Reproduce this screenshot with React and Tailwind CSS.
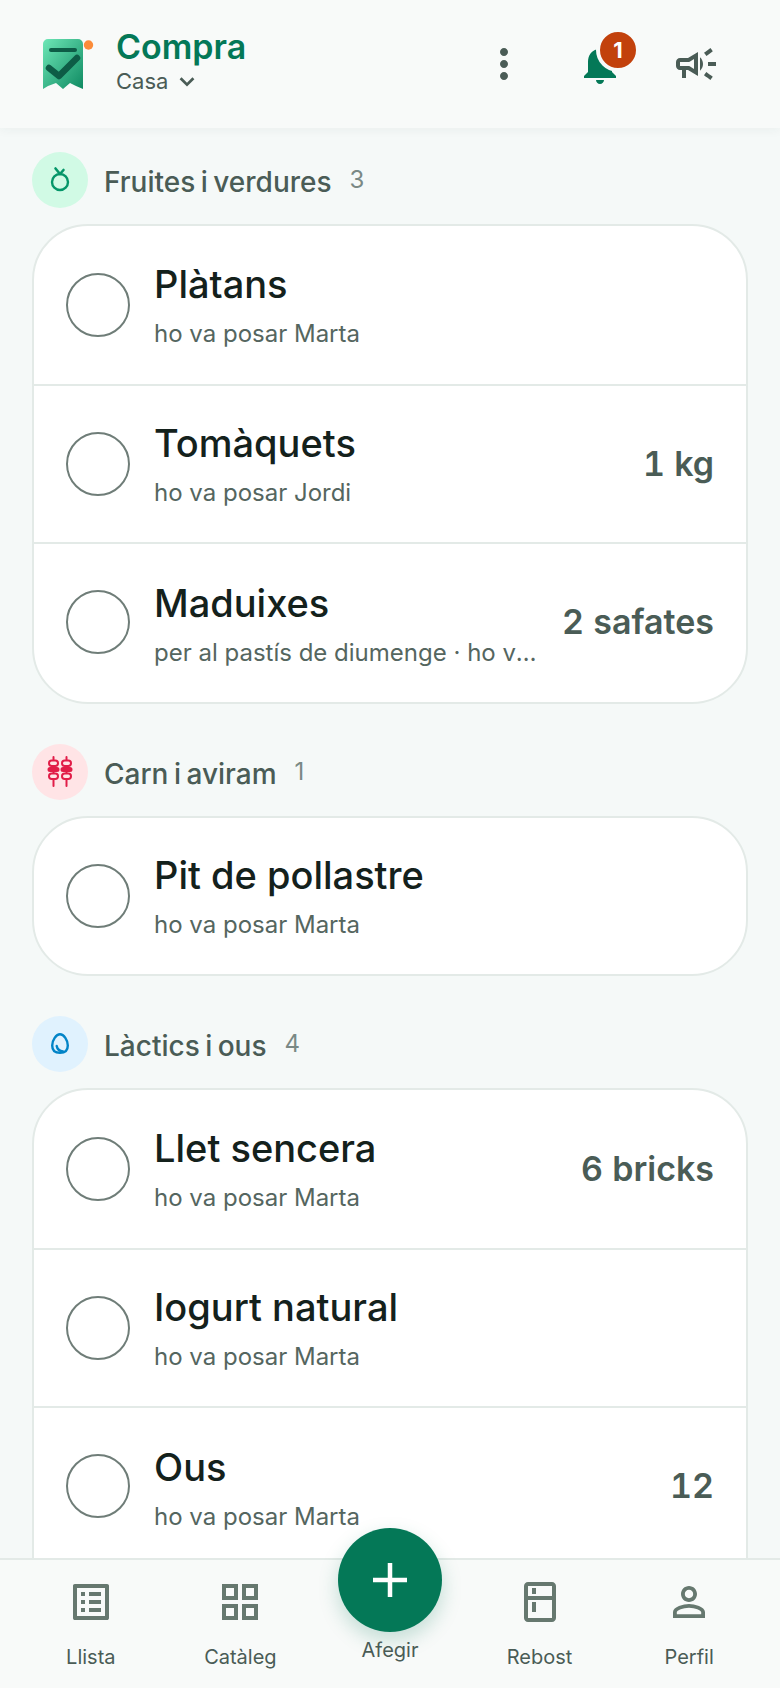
const I = ({ d, className = "" }) => (
  <svg viewBox="0 0 24 24" className={className} fill="currentColor"><path d={d} /></svg>
);

const sections = [
  {
    name: "Fruites i verdures", count: 3, bg: "bg-[#d1fae5]", icon: "fruit",
    items: [
      { n: "Plàtans", s: "ho va posar Marta" },
      { n: "Tomàquets", s: "ho va posar Jordi", q: "1 kg" },
      { n: "Maduixes", s: "per al pastís de diumenge · ho va posar Marta", q: "2 safates", third: true },
    ],
  },
  {
    name: "Carn i aviram", count: 1, bg: "bg-[#ffe4e6]", icon: "meat",
    items: [{ n: "Pit de pollastre", s: "ho va posar Marta", single: true }],
  },
  {
    name: "Làctics i ous", count: 4, bg: "bg-[#e0f2fe]", icon: "egg",
    items: [
      { n: "Llet sencera", s: "ho va posar Marta", q: "6 bricks" },
      { n: "Iogurt natural", s: "ho va posar Marta" },
      { n: "Ous", s: "ho va posar Marta", q: "12", third: true },
      { n: "Mantega", s: "ho va posar Marta" },
    ],
  },
];

function CatIcon({ type }) {
  if (type === "fruit")
    return (
      <svg viewBox="0 0 32 32" className="w-8 h-8 text-[#059669]" fill="none" stroke="currentColor" strokeWidth="2.4" strokeLinecap="round">
        <circle cx="16" cy="18" r="8" />
        <path d="M16 10 L11.500 4.500 M16 10 L19.500 6" strokeWidth="2.600" />
      </svg>
    );
  if (type === "meat")
    return (
      <svg viewBox="0 0 32 32" className="w-8 h-8 text-[#e11d48]" fill="none" stroke="currentColor" strokeWidth="2" strokeLinecap="round">
        <path d="M9.500 1v29M22.500 1v29" />
        <rect x="5" y="4.500" width="9" height="5.500" rx="2.700" fill="#ffe4e6" />
        <rect x="4.500" y="12" width="10" height="3" rx="1.500" fill="currentColor" />
        <rect x="5" y="17.500" width="9" height="5.500" rx="2.700" fill="#ffe4e6" />
        <rect x="18" y="4.500" width="9" height="5.500" rx="2.700" fill="#ffe4e6" />
        <rect x="17.500" y="12" width="10" height="3" rx="1.500" fill="currentColor" />
        <rect x="18" y="17.500" width="9" height="5.500" rx="2.700" fill="#ffe4e6" />
      </svg>
    );
  return (
    <svg viewBox="0 0 32 32" className="w-8 h-8 text-[#0284c7]" fill="none" stroke="currentColor" strokeWidth="2.4" strokeLinecap="round">
      <path d="M16 6.200c3.800 0 7.800 6 7.800 11.200S20.500 24.800 16 24.800 8.200 22.500 8.200 17.400 12.200 6.200 16 6.200z" />
      <path d="M12.700 18c.5 2.900 3 5 6.300 5.500" />
    </svg>
  );
}

function Row({ item, first }) {
  const height = item.third ? "h-[160px] pb-[2px]" : item.single ? "h-[156px]" : "h-[158px]";
  return (
    <div className={`flex items-center px-[32px] ${height} ${first ? "" : "border-t-2 border-[#e3eae7]"}`}>
      <div className="w-[64px] h-[64px] shrink-0 rounded-full border-2 border-[#6f7d78]" />
      <div className={`ml-[24px] flex-1 min-w-0 ${item.third ? "translate-y-[2px]" : ""}`}>
        <div className="text-[38px] leading-[48px] font-medium text-[#14211c]">{item.n}</div>
        <div className="mt-[10px] text-[24px] leading-[32px] text-[#55665f] truncate">{item.s}</div>
      </div>
      {item.q && (
        <div className="ml-[24px] shrink-0 text-[34px] leading-[40px] font-semibold text-[#4a5c56] tabular-nums">{item.q}</div>
      )}
    </div>
  );
}

function Section({ sec }) {
  return (
    <section className="mb-[40px]">
      <div className="flex items-center h-[56px] mb-[16px]">
        <div className={`w-[56px] h-[56px] rounded-full flex items-center justify-center ${sec.bg}`}>
          <CatIcon type={sec.icon} />
        </div>
        <span className="ml-[16px] text-[28px] leading-[40px] font-medium text-[#4a5c56] [word-spacing:-2px] translate-y-[2px]">{sec.name}</span>
        <span className="ml-[18px] text-[24px] leading-[32px] text-[#7a8985]">{sec.count}</span>
      </div>
      <div className="bg-white border-2 border-[#e3eae7] rounded-[56px] overflow-hidden">
        {sec.items.map((it, i) => (
          <Row key={it.n} item={it} first={i === 0} />
        ))}
      </div>
    </section>
  );
}

function Logo() {
  return (
    <svg viewBox="0 0 56 56" className="w-[56px] h-[56px]" fill="none">
      <defs>
        <linearGradient id="lg" x1="0" y1="0" x2="1" y2="1">
          <stop offset="0" stopColor="#6ee7b7" />
          <stop offset="1" stopColor="#0f8a62" />
        </linearGradient>
      </defs>
      <path d="M3 8a5 5 0 0 1 5-5h30a5 5 0 0 1 5 5v45l-7-3-6-3-7 6-7-6-8 3-5 3z" fill="url(#lg)" />
      <path d="M11 14h24" stroke="#0d5c46" strokeWidth="4" strokeLinecap="round" />
      <path d="M9 32l10 8 18-18" stroke="#0d5c46" strokeWidth="6.500" strokeLinecap="round" strokeLinejoin="round" />
      <circle cx="48.500" cy="9" r="4.700" fill="#fb8c3a" />
    </svg>
  );
}

function NavItem({ d, label }) {
  return (
    <div className="flex-1 flex flex-col items-center pt-[18px]">
      <I d={d} className="w-[48px] h-[48px] text-[#66786f]" />
      <span className="mt-[17px] text-[20px] leading-[28px] text-[#4a5c56]">{label}</span>
    </div>
  );
}

export default function App() {
  return (
    <div className="relative w-[780px] h-[1688px] overflow-hidden flex flex-col bg-[#f5f9f8] font-['Inter',sans-serif]">
      <header className="relative z-10 h-[128px] shrink-0 bg-[#f8faf9] shadow-[0_2px_10px_rgba(30,60,50,0.05)] flex items-center pl-[40px] pr-[36px]">
        <Logo />
        <div className="ml-[20px] flex-1 pb-[6px]">
          <div className="text-[34px] leading-[40px] font-semibold text-[#047857]">Compra</div>
          <div className="flex items-center text-[22px] leading-[28px] text-[#4a5c56]">
            Casa
            <svg viewBox="0 0 24 24" className="ml-[8px] w-[22px] h-[22px]" fill="none" stroke="currentColor" strokeWidth="3"><path d="M5 9l7 7 7-7" /></svg>
          </div>
        </div>
        <div className="w-[96px] h-[96px] flex items-center justify-center">
          <I className="w-[48px] h-[48px] text-[#4a5c56]" d="M12 8c1.100 0 2-.9 2-2s-.9-2-2-2-2 .9-2 2 .9 2 2 2zm0 2c-1.100 0-2 .9-2 2s.9 2 2 2 2-.9 2-2-.9-2-2-2zm0 6c-1.100 0-2 .9-2 2s.9 2 2 2 2-.9 2-2-.9-2-2-2z" />
        </div>
        <div className="relative w-[96px] h-[96px] flex items-center justify-center">
          <I className="w-[48px] h-[48px] text-[#047857]" d="M12 22c1.100 0 2-.9 2-2h-4c0 1.100.9 2 2 2zm6-6v-5c0-3.070-1.630-5.640-4.500-6.320V4c0-.83-.67-1.500-1.500-1.500s-1.500.67-1.500 1.500v.68C7.640 5.360 6 7.920 6 11v5l-2 2v1h16v-1l-2-2z" />
          <div className="absolute left-[44px] top-[12px] w-[44px] h-[44px] rounded-full bg-[#c2410c] border-4 border-[#f8faf9] flex items-center justify-center text-white text-[22px] font-bold box-border">1</div>
        </div>
        <div className="w-[96px] h-[96px] flex items-center justify-center">
          <I className="w-[48px] h-[48px] text-[#4a5c56]" d="M18 11v2h4v-2h-4zm-2 6.610c.96.71 2.210 1.650 3.200 2.390.4-.53.8-1.070 1.200-1.600-.99-.74-2.240-1.680-3.200-2.400-.4.54-.8 1.080-1.200 1.610zM20.400 5.600c-.4-.53-.8-1.070-1.200-1.600-.99.74-2.240 1.680-3.200 2.400.4.53.8 1.070 1.200 1.600.96-.72 2.210-1.650 3.200-2.400zM4 9c-1.100 0-2 .9-2 2v2c0 1.100.9 2 2 2h1v4h2v-4h1l5 3V6L8 9H4zm5.030 1.710L11 9.530v4.940l-1.970-1.180-.48-.29H4v-2h4.550l.48-.29zM15.500 12c0-1.330-.58-2.530-1.500-3.350v6.690c.92-.81 1.500-2.010 1.500-3.340z" />
        </div>
      </header>

      <main className="flex-1 min-h-0 overflow-hidden px-[32px] pt-[24px]">
        {sections.map((s) => (
          <Section key={s.name} sec={s} />
        ))}
      </main>

      <nav className="relative z-10 h-[130px] shrink-0 bg-[#f8faf9] border-t-2 border-[#e3eae7] flex px-[16px]">
        <NavItem label="Llista" d="M19 5v14H5V5h14m1.100-2H3.900c-.5 0-.9.4-.9.9v16.200c0 .4.4.9.9.9h16.200c.4 0 .9-.5.9-.9V3.900c0-.5-.5-.9-.9-.9zM11 7h6v2h-6V7zm0 4h6v2h-6v-2zm0 4h6v2h-6zM7 7h2v2H7zm0 4h2v2H7zm0 4h2v2H7z" />
        <NavItem label="Catàleg" d="M3 3v8h8V3H3zm6 6H5V5h4v4zm-6 4v8h8v-8H3zm6 6H5v-4h4v4zm4-16v8h8V3h-8zm6 6h-4V5h4v4zm-6 4v8h8v-8h-8zm6 6h-4v-4h4v4z" />
        <div className="flex-1 flex flex-col items-center">
          <div className="-mt-[32px] w-[104px] h-[104px] shrink-0 rounded-full bg-[#047857] shadow-[0_8px_20px_rgba(4,120,87,0.22)] flex items-center justify-center">
            <svg viewBox="0 0 48 48" className="w-[48px] h-[48px]" fill="none" stroke="#fff" strokeWidth="4.500"><path d="M24 7v34M7 24h34" /></svg>
          </div>
          <span className="mt-[4px] text-[20px] leading-[28px] text-[#4a5c56]">Afegir</span>
        </div>
        <NavItem label="Rebost" d="M18 2.010L6 2c-1.100 0-2 .89-2 2v16c0 1.100.9 2 2 2h12c1.100 0 2-.9 2-2V4c0-1.110-.9-1.990-2-1.990zM18 20H6v-9.020h12V20zm0-11H6V4h12v5zM8 5h2v3H8zm0 7h2v5H8z" />
        <NavItem label="Perfil" d="M12 5.900c1.160 0 2.100.94 2.100 2.100s-.94 2.100-2.100 2.100S9.900 9.160 9.900 8s.94-2.100 2.100-2.100m0 9c2.970 0 6.100 1.460 6.100 2.100v1.100H5.900V17c0-.64 3.130-2.100 6.100-2.100M12 4C9.790 4 8 5.790 8 8s1.790 4 4 4 4-1.790 4-4-1.790-4-4-4zm0 9c-2.670 0-8 1.340-8 4v3h16v-3c0-2.660-5.330-4-8-4z" />
      </nav>
    </div>
  );
}
